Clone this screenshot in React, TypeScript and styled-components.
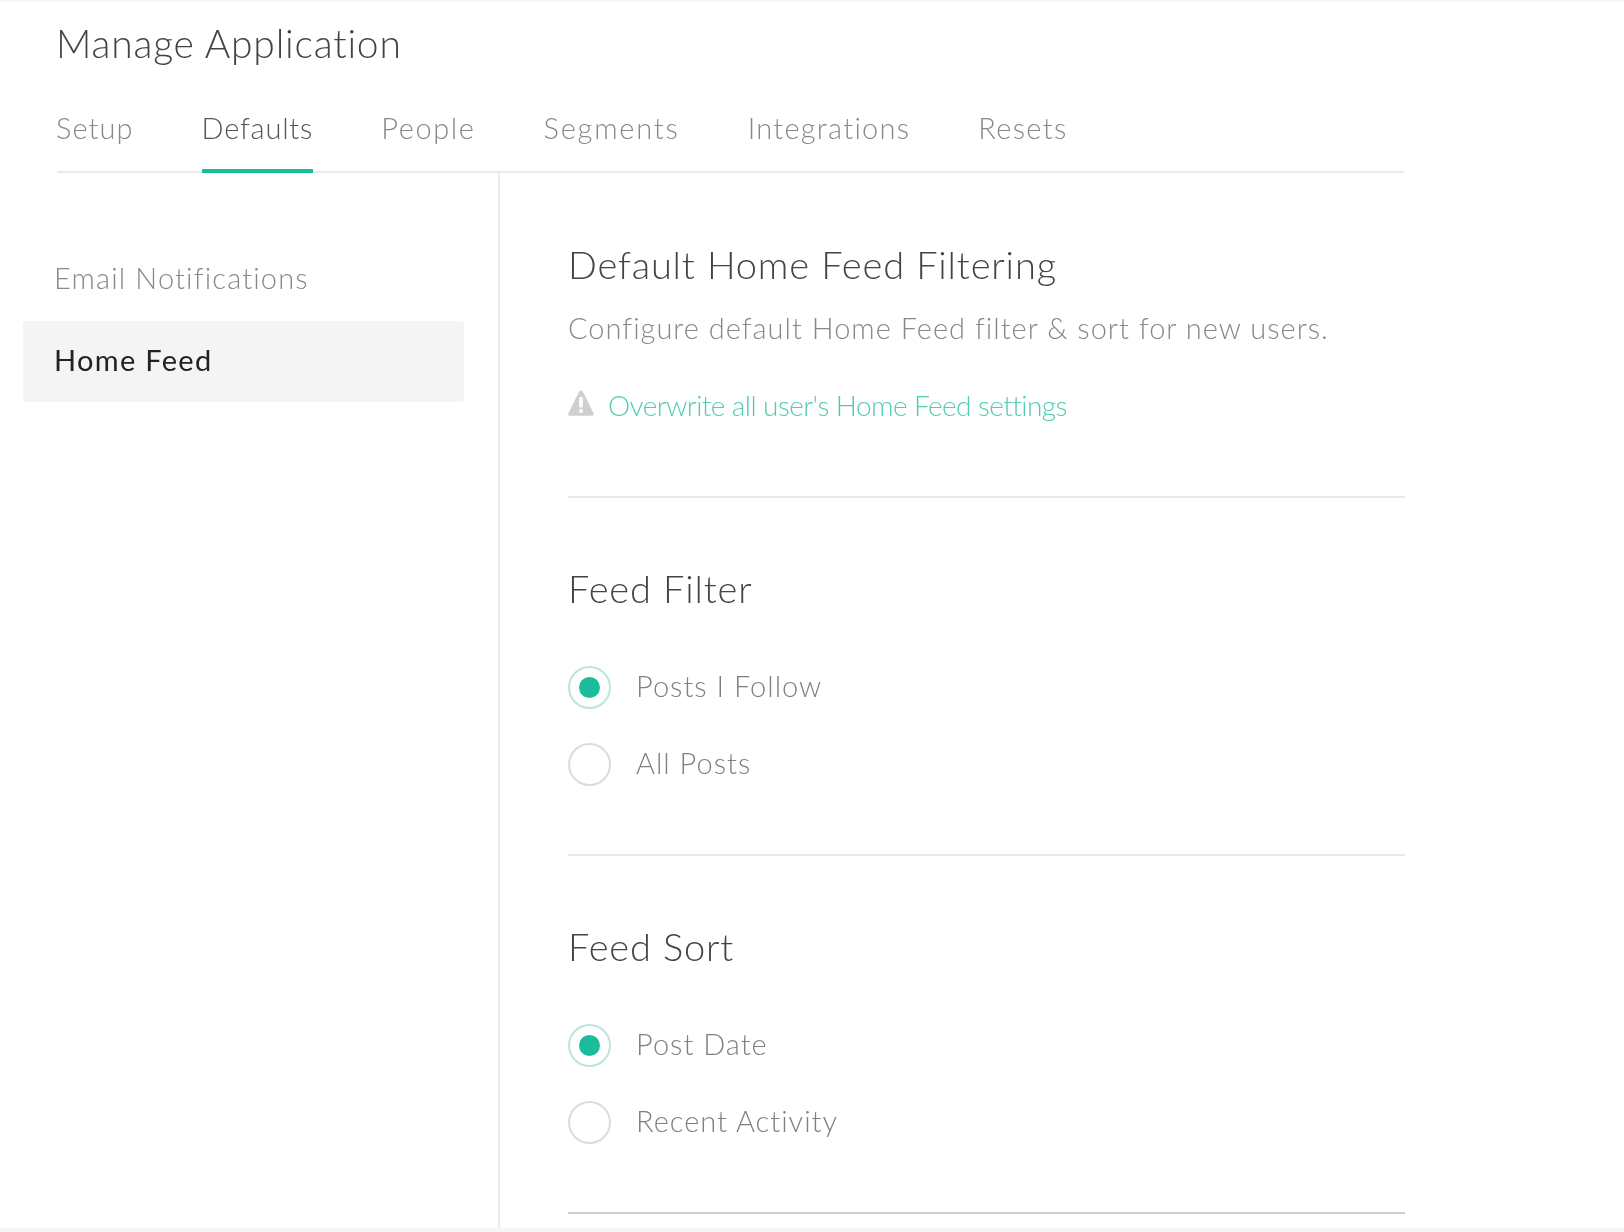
import { createGlobalStyle, styled } from "styled-components";

const GlobalStyle = createGlobalStyle`
  html, body {
    margin: 0;
    padding: 0;
    background: #f5f6f8;
  }

  body {
    font-family: Lato, "Open Sans", "Liberation Sans", sans-serif;
  }
`;

const Page = styled.div`
  box-sizing: border-box;
  width: 1624px;
  height: 1228px;
  padding-left: 23px;
  overflow: hidden;
  background: #fff;
  border-top: 2px solid #f7f7f7;
  filter: blur(0.45px);
`;

const Title = styled.h1`
  margin: 0 0 0 33px;
  padding-top: 18px;
  font-size: 39px;
  line-height: 46px;
  font-weight: 300;
  letter-spacing: 0.8px;
  color: #444;
`;

const Tabs = styled.nav`
  display: flex;
  gap: 68px;
  box-sizing: border-box;
  width: 1347px;
  height: 89px;
  margin: 18px 0 0 34px;
  padding-top: 25px;
  border-bottom: 2px solid #ebebeb;

  & > :first-child {
    margin-left: -1px;
  }
`;

const Tab = styled.a<{ $active?: boolean; $spacing: number }>`
  box-sizing: border-box;
  height: 64px;
  font-size: 29px;
  line-height: 38px;
  font-weight: 300;
  letter-spacing: ${(p) => p.$spacing}px;
  color: ${(p) => (p.$active ? "#555" : "#888")};
  border-bottom: ${(p) => (p.$active ? "4px solid #1abc9c" : "none")};
`;

const Body = styled.div`
  display: flex;
  height: 1060px;
`;

const Sidebar = styled.aside`
  box-sizing: border-box;
  width: 477px;
  padding-top: 66px;
  border-right: 2px solid #ececec;
`;

const SideList = styled.div`
  display: flex;
  flex-direction: column;
  gap: 1px;
`;

const SideItem = styled.div<{ $active?: boolean }>`
  box-sizing: border-box;
  width: 441px;
  height: 81px;
  padding-left: 31px;
  font-size: 29px;
  line-height: 78px;
  font-weight: ${(p) => (p.$active ? 400 : 300)};
  letter-spacing: ${(p) => (p.$active ? "1.3px" : "1.15px")};
  color: ${(p) => (p.$active ? "#222" : "#888")};
  background: ${(p) => (p.$active ? "#f4f4f4" : "transparent")};
  border-radius: 4px;
`;

const Content = styled.main`
  box-sizing: border-box;
  width: 905px;
  padding: 68px 0 0 68px;
`;

const Block = styled.section`
  padding-bottom: 68px;
  border-bottom: 2px solid #e9e9e9;

  & + & {
    padding-top: 67px;
  }

  &:last-child {
    border-bottom-color: #cdcdcd;
  }
`;

const Heading = styled.h2`
  margin: 0;
  font-size: 38px;
  line-height: 46px;
  font-weight: 300;
  letter-spacing: 0.85px;
  color: #444;
`;

const Description = styled.p`
  margin: 21px 0 0;
  font-size: 29px;
  line-height: 40px;
  font-weight: 300;
  letter-spacing: 1px;
  color: #888;
`;

const WarnRow = styled.div`
  display: flex;
  align-items: center;
  gap: 14px;
  height: 30px;
  margin: 43px 0 7px;
`;

const WarnLink = styled.a`
  padding-bottom: 2px;
  font-size: 28px;
  line-height: 30px;
  font-weight: 300;
  letter-spacing: -0.57px;
  color: #52ccaf;
`;

const WarnGlyph = styled.svg`
  flex: none;
  margin-bottom: 6px;
`;

const Options = styled.div`
  display: flex;
  flex-direction: column;
  gap: 34px;
  margin-top: 55px;
`;

const Option = styled.label`
  display: flex;
  align-items: center;
  gap: 25px;
  height: 43px;
  font-size: 29px;
  font-weight: 300;
  letter-spacing: 1px;
  color: #808080;
`;

const OptionText = styled.span`
  margin-bottom: 5px;
`;

const Radio = styled.span<{ $checked?: boolean }>`
  display: flex;
  align-items: center;
  justify-content: center;
  box-sizing: border-box;
  width: 43px;
  height: 43px;
  border-radius: 50%;
  border: 2px solid ${(p) => (p.$checked ? "#bde5dc" : "#dcdcdc")};

  &::after {
    content: "";
    display: ${(p) => (p.$checked ? "block" : "none")};
    width: 21px;
    height: 21px;
    border-radius: 50%;
    background: #1abc9c;
  }
`;

const WarnIcon = () => (
  <WarnGlyph width="26" height="26" viewBox="0 0 26 26" aria-hidden="true">
    <path
      d="M13 0.5c0.8 0 1.4 0.4 1.8 1.1l10.8 21.6c0.6 1.2-0.2 2.6-1.6 2.6H2c-1.4 0-2.2-1.4-1.6-2.6L11.2 1.6C11.6 0.9 12.2 0.5 13 0.5z"
      fill="#cfcfcf"
    />
    <rect x="11.2" y="7" width="3.6" height="10.5" rx="1.2" fill="#fff" />
    <circle cx="13" cy="21" r="2" fill="#fff" />
  </WarnGlyph>
);

const tabs = [
  { label: "Setup", spacing: 1.05 },
  { label: "Defaults", spacing: 0.8 },
  { label: "People", spacing: 1.6 },
  { label: "Segments", spacing: 1.8 },
  { label: "Integrations", spacing: 1.25 },
  { label: "Resets", spacing: 1.3 },
];

const App = () => {
  return (
    <>
      <GlobalStyle />
      <Page>
        <Title>Manage Application</Title>
        <Tabs>
          {tabs.map((t) => (
            <Tab key={t.label} $active={t.label === "Defaults"} $spacing={t.spacing}>
              {t.label}
            </Tab>
          ))}
        </Tabs>
        <Body>
          <Sidebar>
            <SideList>
              <SideItem>Email Notifications</SideItem>
              <SideItem $active>Home Feed</SideItem>
            </SideList>
          </Sidebar>
          <Content>
            <Block>
              <Heading>Default Home Feed Filtering</Heading>
              <Description>
                Configure default Home Feed filter &amp; sort for new users.
              </Description>
              <WarnRow>
                <WarnIcon />
                <WarnLink>Overwrite all user's Home Feed settings</WarnLink>
              </WarnRow>
            </Block>
            <Block>
              <Heading>Feed Filter</Heading>
              <Options>
                <Option>
                  <Radio $checked />
                  <OptionText>Posts I Follow</OptionText>
                </Option>
                <Option>
                  <Radio />
                  <OptionText>All Posts</OptionText>
                </Option>
              </Options>
            </Block>
            <Block>
              <Heading>Feed Sort</Heading>
              <Options>
                <Option>
                  <Radio $checked />
                  <OptionText>Post Date</OptionText>
                </Option>
                <Option>
                  <Radio />
                  <OptionText>Recent Activity</OptionText>
                </Option>
              </Options>
            </Block>
          </Content>
        </Body>
      </Page>
    </>
  );
};

export default App;
